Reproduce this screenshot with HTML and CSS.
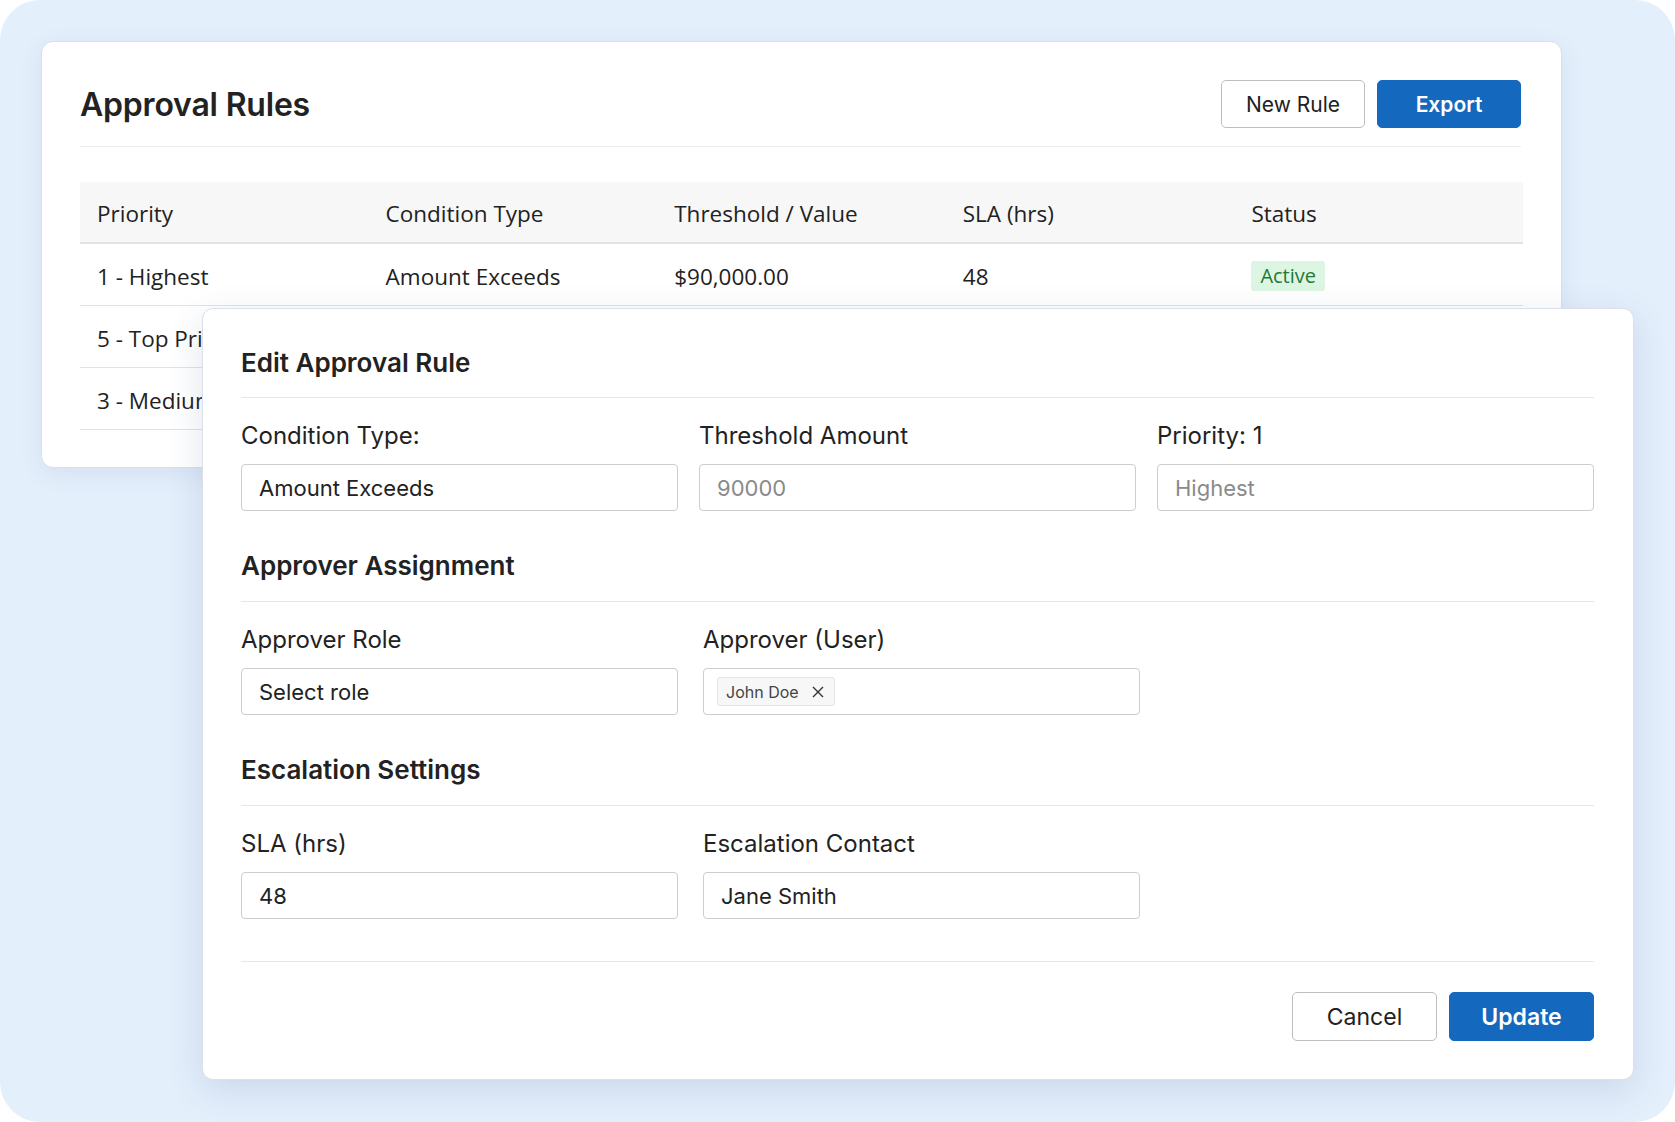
FILE: index.html
```html
<html>
  <head>
    <title>Approval Rules</title>
    <link rel="stylesheet" href="styles.css">
  </head>
  <body>
    <div id="frame">
      <div class="card">
        <div class="card-head">
          <h1>Approval Rules</h1>
          <div class="actions">
            <button class="btn">New Rule</button>
            <button class="btn primary">Export</button>
          </div>
        </div>
        <table class="rules">
          <thead>
            <tr><th>Priority</th><th>Condition Type</th><th>Threshold / Value</th><th>SLA (hrs)</th><th>Status</th></tr>
          </thead>
          <tbody>
            <tr><td>1 - Highest</td><td>Amount Exceeds</td><td>$90,000.00</td><td>48</td><td><span class="badge">Active</span></td></tr>
            <!-- rows below sit under the edit dialog -->
            <tr><td>5 - Top Priority</td><td></td><td></td><td></td><td></td></tr>
            <tr><td>3 - Medium</td><td></td><td></td><td></td><td></td></tr>
          </tbody>
        </table>
      </div>

      <div class="modal">
        <h2>Edit Approval Rule</h2>
        <div class="fields">
          <div class="field">
            <label>Condition Type:</label>
            <div class="input">Amount Exceeds</div>
          </div>
          <div class="field">
            <label>Threshold Amount</label>
            <div class="input muted">90000</div>
          </div>
          <div class="field">
            <label>Priority: 1</label>
            <div class="input muted">Highest</div>
          </div>
        </div>

        <h2 class="section">Approver Assignment</h2>
        <div class="fields pair">
          <div class="field">
            <label>Approver Role</label>
            <div class="input">Select role</div>
          </div>
          <div class="field">
            <label>Approver (User)</label>
            <div class="input tags">
              <span class="chip">John Doe
                <svg width="14" height="14" viewBox="0 0 14 14"><path d="M2 2L12 12M12 2L2 12" stroke="#333" stroke-width="1.4" fill="none"/></svg>
              </span>
            </div>
          </div>
        </div>

        <h2 class="section">Escalation Settings</h2>
        <div class="fields pair">
          <div class="field">
            <label>SLA (hrs)</label>
            <div class="input">48</div>
          </div>
          <div class="field">
            <label>Escalation Contact</label>
            <div class="input">Jane Smith</div>
          </div>
        </div>

        <div class="modal-foot">
          <button class="btn big">Cancel</button>
          <button class="btn big primary">Update</button>
        </div>
      </div>
    </div>
  </body>
</html>
```

FILE: styles.css
```css
body{
  margin:0;
  background:white;
}

#frame{
  position:relative;
  width:1675px;
  height:1122px;
  box-sizing:border-box;
  padding:41px;
  background:#e4effc;
  border-radius:40px;
  font-family:Inter,"Open Sans",sans-serif;
  color:#222;
}

.card{
  width:1521px;
  height:427px;
  box-sizing:border-box;
  padding:38px 40px 0 38px;
  background:white;
  border:1px solid #d9dfe7;
  border-radius:12px;
  box-shadow:0 6px 24px rgba(40,70,120,0.08);
}

.card-head{
  display:flex;
  align-items:center;
  justify-content:space-between;
  padding-bottom:18px;
  border-bottom:1px solid #ececec;
}

h1{
  margin:0;
  font-size:32px;
  font-weight:600;
  letter-spacing:-0.2px;
  color:#222;
}

.actions{
  display:flex;
  gap:12px;
}

.btn{
  width:144px;
  height:48px;
  background:white;
  border:1px solid #bdbdbd;
  border-radius:5px;
  font-family:Inter,sans-serif;
  font-size:21px;
  color:#222;
}

.btn.primary{
  background:#1469be;
  border-color:#1469be;
  color:white;
  font-weight:600;
}

.btn.big{
  width:145px;
  height:49px;
  font-size:23px;
}

.rules{
  width:1443px;
  margin-top:35px;
  border-collapse:collapse;
  table-layout:fixed;
  font-family:"Open Sans",sans-serif;
  font-size:22.5px;
  color:#222;
}

.rules th{
  height:61px;
  padding:2px 17px 0 17px;
  text-align:left;
  font-weight:400;
  background:#f7f7f7;
  border-bottom:2px solid #e3e3e3;
}

.rules td{
  height:62px;
  padding:4px 17px 0 17px;
  border-bottom:1px solid #e2e2e2;
  white-space:nowrap;
}

.badge{
  display:inline-block;
  padding:1px 9px 2px 9px;
  background:#ddf5e3;
  color:#1f7a37;
  border-radius:3px;
  font-size:20px;
  font-weight:500;
}

.modal{
  position:absolute;
  left:202px;
  top:308px;
  width:1432px;
  height:772px;
  box-sizing:border-box;
  padding:39px 39px 39px 38px;
  background:white;
  border:1px solid #dbe1e8;
  border-radius:11px;
  box-shadow:0 10px 36px rgba(40,70,120,0.14);
}

h2{
  margin:0;
  padding-bottom:19px;
  border-bottom:1px solid #e6e6e6;
  font-size:26px;
  line-height:30px;
  font-weight:600;
  color:#222;
}

h2.section{
  margin-top:40px;
  padding-bottom:20px;
}

.fields{
  display:grid;
  grid-template-columns:437px 437px 437px;
  column-gap:21px;
  margin-top:25px;
}

.fields.pair{
  column-gap:25px;
}

.field label{
  display:block;
  font-size:24px;
  line-height:26px;
  margin-bottom:15px;
  color:#222;
}

.input{
  display:flex;
  align-items:center;
  height:47px;
  box-sizing:border-box;
  padding:0 17px;
  border:1px solid #cdcdcd;
  border-radius:4px;
  font-size:22px;
  color:#222;
}

.input.muted{
  color:#8a8a8a;
}

.input.tags{
  padding:0 13px;
}

.chip{
  display:flex;
  align-items:center;
  gap:12px;
  height:29px;
  box-sizing:border-box;
  padding:0 9px 0 8px;
  background:#f7f7f7;
  border:1px solid #e4e4e4;
  border-radius:3px;
  font-size:16px;
  color:#444;
}

.modal-foot{
  display:flex;
  justify-content:flex-end;
  gap:12px;
  margin-top:42px;
  padding-top:30px;
  border-top:1px solid #e8e8e8;
}
```
